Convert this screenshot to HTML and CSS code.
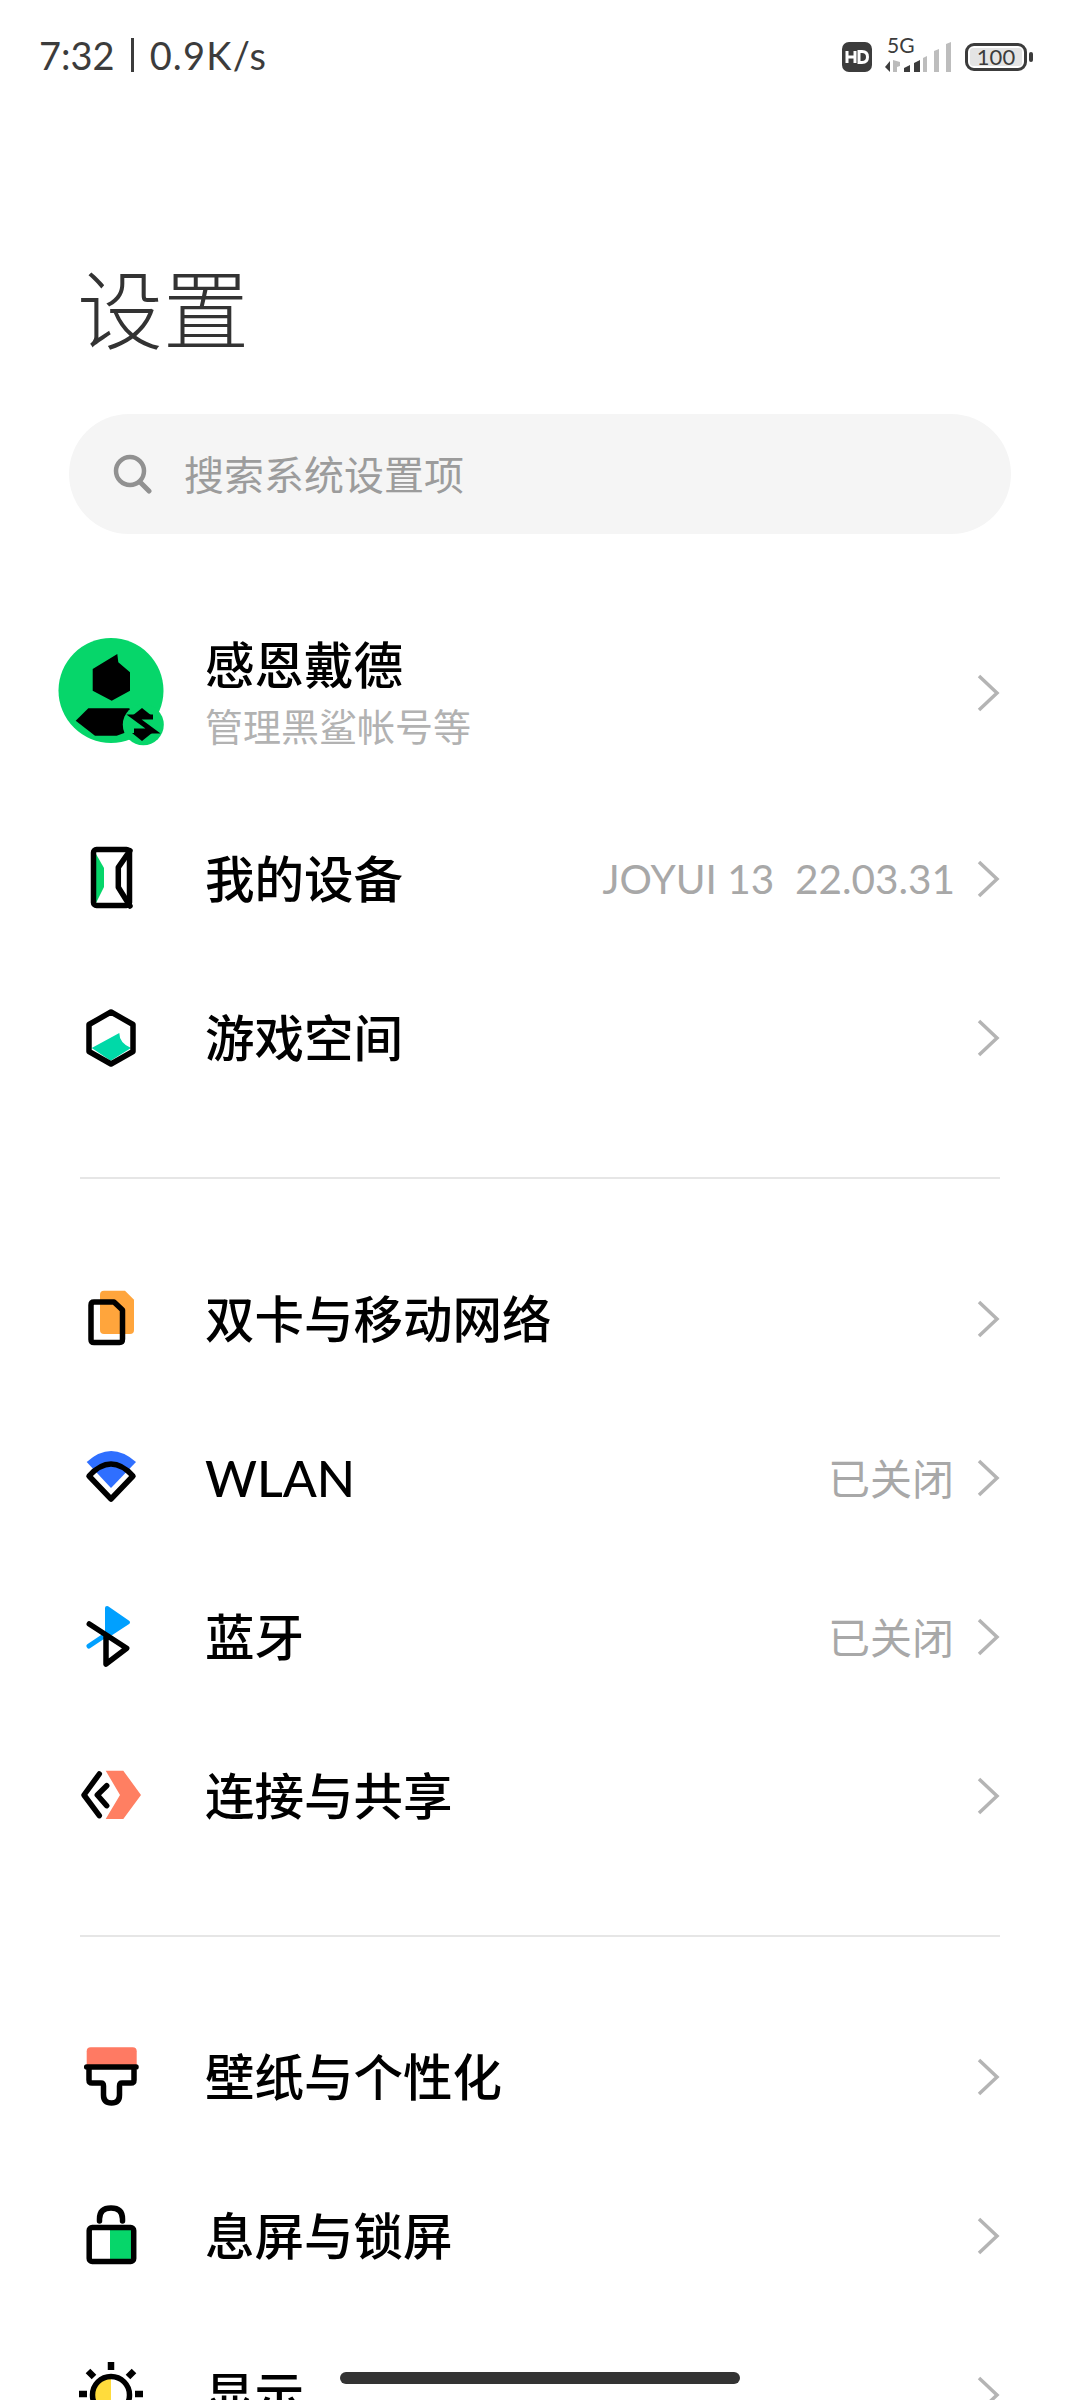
FILE: index.html
```html
<!DOCTYPE html>
<html lang="zh-CN">
<head>
    <meta charset="UTF-8">
    <title>设置</title>
    <link rel="stylesheet" href="styles.css">
</head>
<body>
<div id="page">
    <div class="status">
        <div class="status-left">
            <span>7:32</span><i class="sep"></i><span class="speed">0.9K/s</span>
        </div>
        <div class="status-right">
            <svg class="hd" width="30" height="30" viewBox="0 0 30 30"><rect width="30" height="30" rx="7" fill="#3c3c3c"/><path d="M5 9v12M13 9v12M5 15h8" stroke="#fff" stroke-width="3" fill="none"/><path d="M17 9.500h3q5.500 0 5.500 5.500t-5.500 5.500h-3z" stroke="#fff" stroke-width="3" fill="none"/></svg>
            <div class="net">
                <span class="net-name">5G</span>
                <svg width="37" height="13" viewBox="0 0 37 13"><path d="M6 2v11L1 8z" fill="#3c3c3c"/><path d="M9 1l7 2v4l-3 1v5H9z" fill="#bbb"/><path d="M20 9l6-3v7h-6zM30 4l6-3v12h-6z" fill="#3c3c3c"/></svg>
            </div>
            <svg class="bars" width="28" height="30" viewBox="0 0 28 30"><path d="M0 16l4-2v16H0zM11 9l5-2v23h-5zM23 2l5-2v30h-5z" fill="#bdbdbd"/></svg>
            <div class="battery"><div class="battery-in">100</div></div>
            <i class="nub"></i>
        </div>
    </div>

    <h1 class="title">设置</h1>

    <div class="search">
        <svg width="40" height="40" viewBox="0 0 40 40"><circle cx="17" cy="17" r="14" fill="none" stroke="#919191" stroke-width="4.500"/><path d="M27 28l9 9" stroke="#919191" stroke-width="5" stroke-linecap="round"/></svg>
        <span>搜索系统设置项</span>
    </div>

    <div class="row row-profile">
        <svg class="avatar" width="110" height="110" viewBox="0 0 110 110">
            <circle cx="53" cy="52.500" r="52.500" fill="#06d66a"/>
            <path d="M34.700 31L59.300 16l1 8.300L72 34.300v18.400L53.700 62.700 34.700 52.700z" fill="#000"/>
            <path d="M30.300 70.300h41L80 90 58.700 97.700H37L17.700 82.700z" fill="#000"/>
            <circle cx="85.300" cy="86.700" r="20.500" fill="#06d66a"/>
            <path d="M95 79H76l19 14H76" fill="none" stroke="#000" stroke-width="5"/>
            <path d="M84 70l10 8H74zM84 103l10-8H74z" fill="#000"/>
        </svg>
        <div class="row-text">
            <div class="name">感恩戴德</div>
            <div class="sub">管理黑鲨帐号等</div>
        </div>
        <svg class="arrow" width="24" height="38" viewBox="0 0 24 38"><path d="M3 2l18 17L3 36"/></svg>
    </div>

    <div class="group">
        <div class="row">
            <svg class="icon" width="80" height="80" viewBox="0 0 80 80">
                <path d="M25 15l8 14v19l-8 16z" fill="#06d66a"/>
                <rect x="22.500" y="10.500" width="36" height="56" rx="3" class="line"/>
                <path d="M59 11.700L47.300 28.300v20L59 67" class="line"/>
            </svg>
            <div class="name">我的设备</div>
            <span class="value value-num">JOYUI 13  22.03.31</span>
            <svg class="arrow" width="24" height="38" viewBox="0 0 24 38"><path d="M3 2l18 17L3 36"/></svg>
        </div>
        <div class="row">
            <svg class="icon" width="80" height="80" viewBox="0 0 80 80">
                <path d="M20.700 50l27.600-15q0 10 11.700 15L39.700 62.700z" fill="#00d9a8"/>
                <path d="M40 14l22 12.500v27L40 66 18 53.500v-27z" class="line"/>
            </svg>
            <div class="name">游戏空间</div>
            <svg class="arrow" width="24" height="38" viewBox="0 0 24 38"><path d="M3 2l18 17L3 36"/></svg>
        </div>
    </div>

    <div class="divider"></div>

    <div class="group">
        <div class="row">
            <svg class="icon" width="80" height="80" viewBox="0 0 80 80">
                <path d="M33 11.700h21l9 9V51q0 4-4 4H33q-4 0-4-4V15.700q0-4 4-4z" fill="#ffa53c"/>
                <path d="M23 23h20l8.500 8v29q0 3.500-3 3.500H23q-3 0-3-3V26q0-3 3-3z" class="line"/>
            </svg>
            <div class="name">双卡与移动网络</div>
            <svg class="arrow" width="24" height="38" viewBox="0 0 24 38"><path d="M3 2l18 17L3 36"/></svg>
        </div>
        <div class="row">
            <svg class="icon" width="80" height="80" viewBox="0 0 80 80">
                <path d="M15.700 24Q40 2 65 24L40 50z" fill="#2f6fff"/>
                <path d="M18 38Q40 14 62 38L40 61z" class="line"/>
            </svg>
            <div class="name name-latin">WLAN</div>
            <span class="value">已关闭</span>
            <svg class="arrow" width="24" height="38" viewBox="0 0 24 38"><path d="M3 2l18 17L3 36"/></svg>
        </div>
        <div class="row">
            <svg class="icon" width="80" height="80" viewBox="0 0 80 80">
                <path d="M36 11l21 14.300L36 39z" fill="#00a0ff" stroke="#00a0ff" stroke-width="4" stroke-linejoin="round"/>
                <path d="M36 37L18 49" stroke="#00a0ff" stroke-width="5" stroke-linecap="round"/>
                <path d="M18.300 27l37.400 24.300L35 67V38.700" class="line"/>
            </svg>
            <div class="name">蓝牙</div>
            <span class="value">已关闭</span>
            <svg class="arrow" width="24" height="38" viewBox="0 0 24 38"><path d="M3 2l18 17L3 36"/></svg>
        </div>
        <div class="row">
            <svg class="icon" width="80" height="80" viewBox="0 0 80 80">
                <path d="M34.700 14.700h17.600L70 39 52.300 63H34.700L49 39z" fill="#ff7f62"/>
                <path d="M28.300 18L13 39l15.300 20.700M35.700 29.700L26.300 39l9.400 10.700" class="line"/>
            </svg>
            <div class="name">连接与共享</div>
            <svg class="arrow" width="24" height="38" viewBox="0 0 24 38"><path d="M3 2l18 17L3 36"/></svg>
        </div>
    </div>

    <div class="divider"></div>

    <div class="group">
        <div class="row">
            <svg class="icon" width="80" height="80" viewBox="0 0 80 80">
                <path d="M19.700 10.300h42q4 0 4 4v14.400h-50V14.300q0-4 4-4z" fill="#ff7a63"/>
                <path d="M18 30v13q0 3 3 3h9q2.500 0 2.500 3v9q0 8 8 8t8-8v-9q0-3 2.500-3h9q3 0 3-3V30M15.700 30h49.300" class="line"/>
            </svg>
            <div class="name">壁纸与个性化</div>
            <svg class="arrow" width="24" height="38" viewBox="0 0 24 38"><path d="M3 2l18 17L3 36"/></svg>
        </div>
        <div class="row">
            <svg class="icon" width="80" height="80" viewBox="0 0 80 80">
                <rect x="39" y="33" width="22" height="31" fill="#06d66a"/>
                <rect x="18.200" y="31.500" width="44.500" height="34" rx="3" class="line"/>
                <path d="M28.500 25v-2q0-11 11.500-11t11.500 11v2" class="line"/>
            </svg>
            <div class="name">息屏与锁屏</div>
            <svg class="arrow" width="24" height="38" viewBox="0 0 24 38"><path d="M3 2l18 17L3 36"/></svg>
        </div>
        <div class="row">
            <svg class="icon" width="80" height="80" viewBox="0 0 80 80">
                <path d="M40 21.500a18.500 18.500 0 0 0 0 37z" fill="#ffdc3c"/>
                <circle cx="40" cy="40" r="18.500" class="line"/>
                <path d="M40 7v8M8 39h8M64 39h8M17 16l6 6M63 16l-6 6" stroke="#000" stroke-width="6.500"/>
            </svg>
            <div class="name">显示</div>
            <svg class="arrow" width="24" height="38" viewBox="0 0 24 38"><path d="M3 2l18 17L3 36"/></svg>
        </div>
    </div>

    <div class="home-bar"></div>
</div>
</body>
</html>
```

FILE: styles.css
```css
*{
    padding: 0;
    margin: 0;
    box-sizing: border-box;
}
body{
    background: #fff;
    font-family: "Noto Sans CJK SC", "Noto Sans", sans-serif;
}
#page{
    width: 1080px;
    height: 2400px;
    position: relative;
    overflow: hidden;
}
.status{
    height: 110px;
    padding: 0 47px 0 39px;
    display: flex;
    align-items: center;
    justify-content: space-between;
    color: #3c3c3c;
    font-family: Lato, sans-serif;
}
.status-left{
    display: flex;
    align-items: center;
    font-size: 38px;
}
.status-left .sep{
    width: 3px;
    height: 34px;
    margin: 0 16px;
    background: #3c3c3c;
}
.speed{
    letter-spacing: 1.200px;
}
.status-right{
    height: 34px;
    margin-top: -1px;
    display: flex;
    align-items: flex-end;
}
.net{
    width: 37px;
    margin-left: 12px;
    display: flex;
    flex-direction: column;
}
.net-name{
    font-size: 21px;
    line-height: 17px;
    margin: 0 0 6px 3px;
}
.bars{
    margin-left: 2px;
}
.battery{
    width: 62px;
    height: 28px;
    margin: 0 0 1px 14px;
    padding: 2px;
    border: 3px solid #3c3c3c;
    border-radius: 9px;
}
.battery-in{
    height: 100%;
    font-size: 22px;
    line-height: 18px;
    text-align: center;
    background: #e4e4e4;
    border-radius: 3px;
}
.nub{
    width: 4px;
    height: 10px;
    margin: 0 0 10px 2px;
    background: #3c3c3c;
    border-radius: 2px;
}
.title{
    height: 304px;
    padding: 151px 0 0 77px;
    font-size: 86px;
    line-height: 90px;
    font-weight: 300;
    color: #333;
}
.search{
    width: 942px;
    height: 120px;
    margin-left: 69px;
    padding-left: 44px;
    display: flex;
    align-items: center;
    gap: 31px;
    background: #f5f5f5;
    border-radius: 60px;
    font-size: 40px;
    color: #9c9c9c;
}
.search span{
    padding-bottom: 3px;
}
.row{
    height: 159px;
    padding: 0 80px 0 71px;
    display: flex;
    align-items: center;
}
.row-profile{
    height: 160px;
    margin-top: 79px;
    margin-bottom: 26px;
    padding-left: 58px;
}
.avatar{
    margin-right: 37px;
    flex: none;
}
.icon{
    margin-right: 54px;
    flex: none;
}
.line{
    fill: none;
    stroke: #000;
    stroke-width: 5.500;
    stroke-linejoin: round;
    stroke-linecap: round;
}
.name{
    font-size: 49.500px;
    line-height: 62px;
    font-weight: 500;
    color: #000;
    padding-bottom: 3px;
}
.name-latin{
    font-family: Lato, sans-serif;
    font-size: 50px;
    padding-bottom: 0;
}
.row-text .name{
    padding-bottom: 0;
    margin-top: -7px;
}
.sub{
    font-size: 38px;
    line-height: 46px;
    margin-top: 8px;
    color: #b2b2b2;
}
.value{
    margin-left: auto;
    padding-bottom: 3px;
    font-size: 42px;
    color: #a8a8a8;
}
.value-num{
    font-family: Lato, sans-serif;
    font-size: 40.500px;
    padding-bottom: 1px;
    margin-right: -1px;
    white-space: pre;
}
.arrow{
    margin-left: 22px;
    flex: none;
}
.row .name + .arrow,
.row-text + .arrow{
    margin-left: auto;
}
.arrow path{
    fill: none;
    stroke: #b4b4b4;
    stroke-width: 3.500;
}
.divider{
    height: 2px;
    margin: 60px 80px;
    background: #e6e6e6;
}
.home-bar{
    position: absolute;
    left: 340px;
    bottom: 16px;
    width: 400px;
    height: 12px;
    background: #333;
    border-radius: 6px;
}
```
